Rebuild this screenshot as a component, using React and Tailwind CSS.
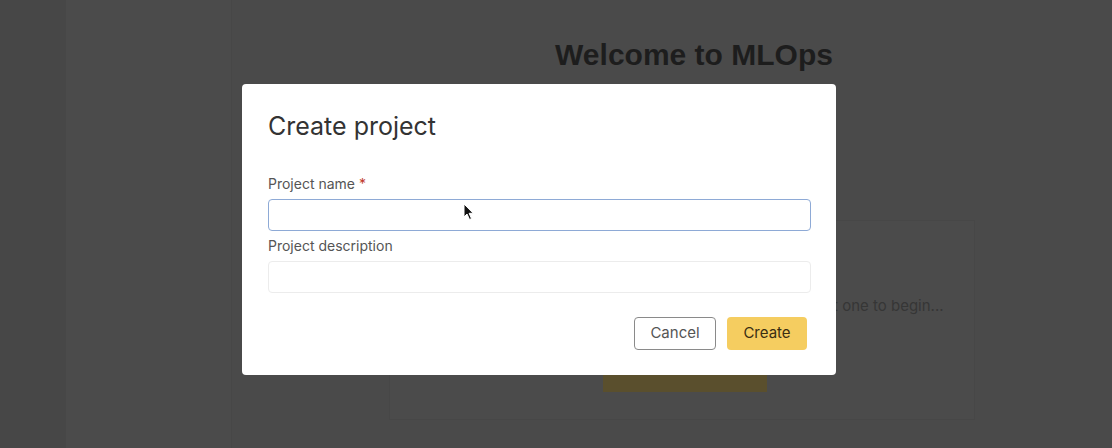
import React from "react";

function Cursor() {
  return (
    <svg width="12" height="18" viewBox="0 0 12 18" className="absolute left-[463px] top-[203px]">
      <path d="M1 1 L1 14 L4 11 L6.5 16.5 L8.5 15.6 L6.1 10.3 L10.2 10.3 Z" fill="#111" stroke="#fff" strokeWidth="1" strokeLinejoin="round" />
    </svg>
  );
}

export default function App() {
  return (
    <div className="relative w-[1112px] h-[448px] overflow-hidden bg-[#4a4a4a]" style={{ fontFamily: "Inter, 'Noto Sans', sans-serif" }}>
      {/* background page (dimmed) */}
      <div className="flex h-full">
        <div className="w-[66px] h-full bg-[#474747]" />
        <div className="w-[166px] h-full bg-[#4b4b4b] border-r border-[#474747]" />
        <div className="flex-1 flex flex-col items-center pt-[37px]">
          <h1 className="text-[30px] font-bold text-[#1d1d1d] leading-[36px] ml-[44px]" style={{ fontFamily: "'Liberation Sans', Arial, sans-serif" }}>
            Welcome to MLOps
          </h1>
          <div className="mt-[147px] ml-[20px] w-[586px] h-[200px] border border-[#474747] bg-[#4b4b4b] flex flex-col items-center pt-[74px]">
            <p className="text-[15px] text-[#363636] whitespace-nowrap">You haven't created any projects yet. Create your very first one to begin...</p>
            <div className="mt-[46px] ml-[6px] w-[164px] h-[28px] bg-[#5a4f2d]" />
          </div>
        </div>
      </div>

      {/* modal */}
      <div className="absolute left-[242px] top-[84px] w-[594px] h-[291px] bg-white rounded-[4px] px-[26px] pt-[26px] pb-[25px] flex flex-col">
        <h2 className="text-[25px] leading-[32px] text-[#333] font-normal">Create project</h2>
        <label className="mt-[32px] text-[14px] leading-[20px] text-[#555]">
          Project name <span className="text-[#c0392b]">*</span>
        </label>
        <div className="mt-[5px] h-[32px] w-[543px] rounded-[4px] border border-[#8eaad6] bg-white" />
        <label className="mt-[5px] text-[14px] leading-[20px] text-[#555]">Project description</label>
        <div className="mt-[5px] h-[32px] w-[543px] rounded-[4px] border border-[#ececec] bg-white" />
        <div className="mt-[24px] flex justify-end gap-[11px] pr-[3px]">
          <button className="w-[82px] h-[33px] rounded-[4px] border border-[#8a8a8a] bg-white text-[15px] text-[#555]">
            Cancel
          </button>
          <button className="w-[80px] h-[33px] rounded-[4px] bg-[#f5cd60] text-[15px] text-[#3a2e12]">
            Create
          </button>
        </div>
      </div>

      <Cursor />
    </div>
  );
}
